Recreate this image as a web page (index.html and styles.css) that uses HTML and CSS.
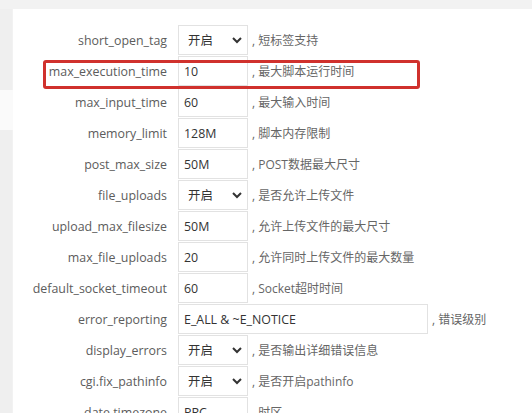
FILE: index.html
```html
<!DOCTYPE html>
<html lang="zh-CN">
<head>
  <meta charset="UTF-8">
  <title>PHP 配置</title>
  <link rel="stylesheet" href="styles.css">
</head>
<body>
  <div class="page">
    <div class="side">
      <div class="side-block"></div>
      <div class="side-gap"></div>
      <div class="side-block grow"></div>
    </div>
    <div class="panel">
      <div class="highlight"></div>
      <div class="conf-list">
        <div class="row">
          <label>short_open_tag</label>
          <div class="select"><span>开启</span><svg width="12" height="12" viewBox="0 0 12 12"><path d="M2 4l4 4 4-4" fill="none" stroke="#333" stroke-width="2"/></svg></div>
          <span class="note">, 短标签支持</span>
        </div>
        <div class="row">
          <label>max_execution_time</label>
          <input class="field" type="text" value="10">
          <span class="note">, 最大脚本运行时间</span>
        </div>
        <div class="row">
          <label>max_input_time</label>
          <input class="field" type="text" value="60">
          <span class="note">, 最大输入时间</span>
        </div>
        <div class="row">
          <label>memory_limit</label>
          <input class="field" type="text" value="128M">
          <span class="note">, 脚本内存限制</span>
        </div>
        <div class="row">
          <label>post_max_size</label>
          <input class="field" type="text" value="50M">
          <span class="note">, POST数据最大尺寸</span>
        </div>
        <div class="row">
          <label>file_uploads</label>
          <div class="select"><span>开启</span><svg width="12" height="12" viewBox="0 0 12 12"><path d="M2 4l4 4 4-4" fill="none" stroke="#333" stroke-width="2"/></svg></div>
          <span class="note">, 是否允许上传文件</span>
        </div>
        <div class="row">
          <label>upload_max_filesize</label>
          <input class="field" type="text" value="50M">
          <span class="note">, 允许上传文件的最大尺寸</span>
        </div>
        <div class="row">
          <label>max_file_uploads</label>
          <input class="field" type="text" value="20">
          <span class="note">, 允许同时上传文件的最大数量</span>
        </div>
        <div class="row">
          <label>default_socket_timeout</label>
          <input class="field" type="text" value="60">
          <span class="note">, Socket超时时间</span>
        </div>
        <div class="row">
          <label>error_reporting</label>
          <input class="field wide" type="text" value="E_ALL &amp; ~E_NOTICE">
          <span class="note">, 错误级别</span>
        </div>
        <div class="row">
          <label>display_errors</label>
          <div class="select"><span>开启</span><svg width="12" height="12" viewBox="0 0 12 12"><path d="M2 4l4 4 4-4" fill="none" stroke="#333" stroke-width="2"/></svg></div>
          <span class="note">, 是否输出详细错误信息</span>
        </div>
        <div class="row">
          <label>cgi.fix_pathinfo</label>
          <div class="select"><span>开启</span><svg width="12" height="12" viewBox="0 0 12 12"><path d="M2 4l4 4 4-4" fill="none" stroke="#333" stroke-width="2"/></svg></div>
          <span class="note">, 是否开启pathinfo</span>
        </div>
        <div class="row">
          <label>date.timezone</label>
          <input class="field" type="text" value="PRC">
          <span class="note">, 时区</span>
        </div>
      </div>
    </div>
  </div>
</body>
</html>
```

FILE: styles.css
```css
body {
  margin: 0;
  background: #f2f2f2;
  font-family: "Open Sans", "Noto Sans CJK SC", sans-serif;
  font-size: 12px;
  color: #666;
  overflow: hidden;
}
.page {
  display: flex;
  height: 413px;
}
.side {
  width: 13px;
  display: flex;
  flex-direction: column;
  padding-top: 9px;
}
.side-block {
  height: 81px;
  background: #efefef;
  width: 12px;
}
.side-block.grow {
  flex: 1;
}
.side-gap {
  height: 40px;
  background: #fafafa;
}
.panel {
  flex: 1;
  background: #fff;
  margin-top: 9px;
  padding-top: 16px;
  position: relative;
}
.conf-list {
  display: flex;
  flex-direction: column;
  gap: 1px;
}
.row {
  display: flex;
  align-items: center;
  height: 30px;
}
.row label {
  width: 154px;
  text-align: right;
  margin-right: 11px;
  white-space: nowrap;
  font-size: 12.4px;
  color: #5c5c5c;
}
.field,
.select {
  box-sizing: border-box;
  width: 70px;
  height: 30px;
  border: 1px solid #e2e2e2;
  background: #fff;
  font-family: inherit;
  font-size: 12.4px;
  color: #333;
  margin: 0;
}
.field {
  padding: 0 5px;
  outline: none;
}
.field.wide {
  width: 250px;
}
.select {
  display: flex;
  align-items: center;
  justify-content: space-between;
  padding: 0 4px 0 9px;
}
.note {
  margin-left: 4px;
  white-space: nowrap;
}
.highlight {
  position: absolute;
  left: 30px;
  top: 51px;
  width: 377px;
  height: 29px;
  box-sizing: border-box;
  border: 3px solid #d0312d;
  border-radius: 3px;
  pointer-events: none;
}
```
